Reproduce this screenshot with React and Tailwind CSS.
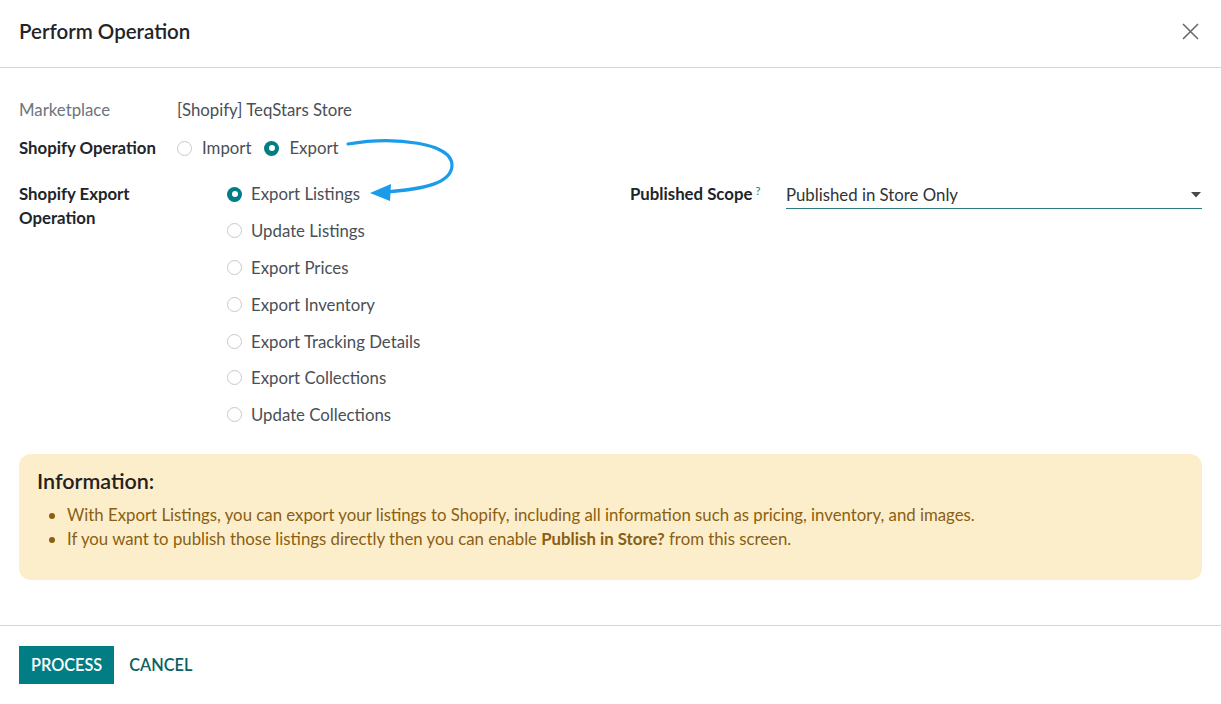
import React, { useState } from 'react';

const font = { fontFamily: 'Lato, "Noto Sans", sans-serif' };

const Radio = ({ checked }) => (
  <span
    className={
      'inline-flex items-center justify-center w-[15px] h-[15px] rounded-full shrink-0 ' +
      (checked ? 'bg-[#017e84]' : 'border border-[#c9c9c9] bg-white')
    }
  >
    {checked && <span className="w-[6px] h-[6px] rounded-full bg-white" />}
  </span>
);

const exportOps = [
  'Export Listings',
  'Update Listings',
  'Export Prices',
  'Export Inventory',
  'Export Tracking Details',
  'Export Collections',
  'Update Collections',
];

export default function App() {
  const [op, setOp] = useState('Export');
  const [exportOp, setExportOp] = useState('Export Listings');

  return (
    <div className="w-[1221px] h-[704px] bg-white text-[16.8px] text-[#374151] relative" style={font}>
      {/* Header */}
      <div className="h-[68px] flex items-center justify-between px-[19px] pb-[4px] border-b border-[#d5d5d5]">
        <h2 className="text-[20.5px] font-semibold text-[#212529]">Perform Operation</h2>
        <button className="w-[24px] h-[24px] flex items-center justify-center text-[#6b6b6b]">
          <svg width="17" height="17" viewBox="0 0 17 17" stroke="currentColor" strokeWidth="1.6" fill="none">
            <path d="M1 1L16 16M16 1L1 16" />
          </svg>
        </button>
      </div>

      {/* Body */}
      <div className="px-[19px] pt-[31px]">
        <div className="flex items-center h-[22px]">
          <span className="w-[158px] text-[#6c757d]">Marketplace</span>
          <span className="text-[#4a4f55]">[Shopify] TeqStars Store</span>
        </div>
        <div className="flex items-center h-[22px] mt-[16px]">
          <span className="w-[158px] font-bold text-[#212529]">Shopify Operation</span>
          <div className="flex items-center gap-[13px] text-[#4a4f55]">
            {['Import', 'Export'].map((o) => (
              <label key={o} className="flex items-center gap-[10px] cursor-pointer" onClick={() => setOp(o)}>
                <Radio checked={op === o} />
                <span>{o}</span>
              </label>
            ))}
          </div>
        </div>

        <div className="flex mt-[23px]">
          <div className="w-[592px] flex">
            <div className="w-[208px] font-bold text-[#212529] leading-[24px]">
              Shopify Export
              <br />
              Operation
            </div>
            <div className="flex flex-col gap-[14.8px] pt-[1px]">
              {exportOps.map((o) => (
                <label key={o} className="flex items-center gap-[9px] h-[22px] text-[#4a4f55] cursor-pointer" onClick={() => setExportOp(o)}>
                  <Radio checked={exportOp === o} />
                  <span>{o}</span>
                </label>
              ))}
            </div>
          </div>
          <div className="flex-1 flex pl-[19px]">
            <div className="w-[156px] font-bold text-[#212529] leading-[24px]">
              Published Scope<sup className="text-[#017e84] font-normal text-[11px] ml-[3px]">?</sup>
            </div>
            <div className="flex-1 h-[27px] border-b border-[#2b7d80] flex items-center justify-between pr-[1px]">
              <span className="text-[#2f3337]">Published in Store Only</span>
              <svg width="10" height="6" viewBox="0 0 10 6" className="text-[#4a4a4a]">
                <path d="M0 0H10L5 5.5Z" fill="currentColor" />
              </svg>
            </div>
          </div>
        </div>

        {/* Info box */}
        <div className="mt-[28px] h-[126px] rounded-[12px] bg-[#fdeecb] px-[18px] pt-[13px]">
          <h3 className="text-[21.5px] font-semibold text-[#222] leading-[28px]">Information:</h3>
          <ul className="list-disc pl-[30px] mt-[8px] text-[#8a5f12] leading-[24px] marker:text-[#8a5f12]">
            <li>With Export Listings, you can export your listings to Shopify, including all information such as pricing, inventory, and images.</li>
            <li>
              If you want to publish those listings directly then you can enable <b className="font-bold">Publish in Store?</b> from this screen.
            </li>
          </ul>
        </div>
      </div>

      {/* Footer */}
      <div className="absolute left-0 right-0 top-[625px] border-t border-[#d5d5d5] px-[19px] pt-[20px] flex items-center gap-[15px]">
        <button className="h-[38px] px-[12px] bg-[#017e84] text-white font-semibold text-[16.3px]">PROCESS</button>
        <button className="h-[38px] text-[#0c5f63] font-semibold text-[16.3px]">CANCEL</button>
      </div>

      {/* Annotation arrow */}
      <svg className="absolute left-0 top-0 pointer-events-none" width="1221" height="704">
        <path d="M348 144 C395 136 452 143 452 165 C452 183 425 189 386 192" fill="none" stroke="#1a9ceb" strokeWidth="3.2" strokeLinecap="round" />
        <path d="M370 193 L391 184 L390 201 Z" fill="#1a9ceb" />
      </svg>
    </div>
  );
}
